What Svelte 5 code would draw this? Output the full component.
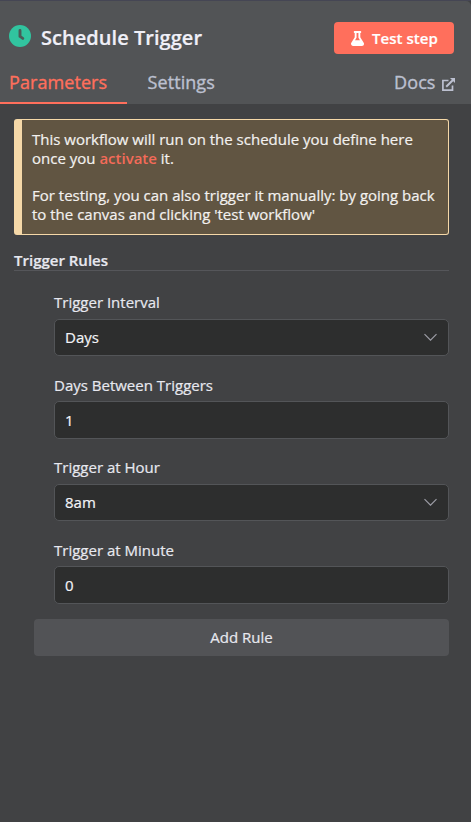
<script>
  const fields = [
    { label: 'Trigger Interval', value: 'Days', select: true },
    { label: 'Days Between Triggers', value: '1', select: false },
    { label: 'Trigger at Hour', value: '8am', select: true },
    { label: 'Trigger at Minute', value: '0', select: false }
  ];
</script>

<div class="panel">
  <header>
    <div class="top">
      <svg class="clock" width="22" height="22" viewBox="0 0 22 22">
        <circle cx="11" cy="11" r="11" fill="#31c49f" />
        <path d="M11 5.400V11.400L13.800 13.400" fill="none" stroke="#4b5a57" stroke-width="2.900" stroke-linecap="round" stroke-linejoin="round" />
      </svg>
      <h1>Schedule Trigger</h1>
      <button class="test">
        <svg width="13" height="15" viewBox="0 0 448 512">
          <path fill="#fff" d="M437.200 403.500L320 215V64h8c13.300 0 24-10.700 24-24V24c0-13.300-10.700-24-24-24H120c-13.300 0-24 10.700-24 24v16c0 13.300 10.700 24 24 24h8v151L10.800 403.500C-18.500 450.600 15.300 512 70.900 512h306.200c55.700 0 89.400-61.500 60.100-108.500zM137.900 320l48.200-77.600c3.700-5.200 5.800-11.600 5.800-18.400V64h64v160c0 6.900 2.200 13.200 5.800 18.400l48.200 77.600h-172z" />
        </svg>
        <span>Test step</span>
      </button>
    </div>
    <nav>
      <a class="tab active" href="#parameters"><span>Parameters</span></a>
      <a class="tab settings" href="#settings"><span>Settings</span></a>
      <a class="docs" href="#docs">
        <span>Docs</span>
        <svg width="13" height="13" viewBox="0 0 13 13" fill="none" stroke="#bcc0d0">
          <path d="M6.500 2.500H.9V12.100H10.500V7.500" stroke-width="1.700" />
          <path d="M4.200 8.800L11 2" stroke-width="2" />
          <path d="M8 0H13V5Z" fill="#bcc0d0" stroke="none" />
        </svg>
      </a>
    </nav>
  </header>

  <main>
    <div class="notice">
      <p>This workflow will run on the schedule you define here<br />once you <b>activate</b> it.</p>
      <p>For testing, you can also trigger it manually: by going back<br />to the canvas and clicking 'test workflow'</p>
    </div>

    <h2>Trigger Rules</h2>

    <div class="fields">
      {#each fields as field}
        <div class="field">
          <div class="label">{field.label}</div>
          <div class="input" class:select={field.select}>
            <span>{field.value}</span>
            {#if field.select}
              <svg width="13" height="8" viewBox="0 0 13 8">
                <path d="M.5 1.200L6.500 7.200L12.500 1.200" fill="none" stroke="#9b9ca5" stroke-width="1.2" />
              </svg>
            {/if}
          </div>
        </div>
      {/each}
    </div>

    <button class="add"><span>Add Rule</span></button>
  </main>
</div>

<style>
  :global(body) {
    margin: 0;
    background: #414244;
  }
  .panel {
    box-sizing: border-box;
    height: 822px;
    border-top: 1px solid #454654;
    background: #414244;
    color: #e7e8ef;
    font-family: 'Open Sans', sans-serif;
    font-size: 15px;
    -webkit-text-stroke: 0.2px currentColor;
    overflow: hidden;
  }
  header {
    box-sizing: border-box;
    height: 103px;
    background: #525456;
    border-radius: 0 5px 0 0;
  }
  .top {
    display: flex;
    align-items: center;
    height: 71px;
    padding: 0 17px 0 9px;
  }
  .clock {
    margin-bottom: 2px;
  }
  h1 {
    margin: 3px auto 0 10px;
    font-size: 20px;
    line-height: 28px;
    font-weight: 600;
    letter-spacing: 0.04px;
    color: #f0f0f8;
    white-space: nowrap;
  }
  button {
    border: 0;
    font-family: inherit;
    display: flex;
    align-items: center;
    justify-content: center;
    padding: 0;
  }
  .test {
    width: 120px;
    height: 32px;
    margin-top: 3px;
    gap: 8px;
    border-radius: 4px;
    background: #ff6f5c;
    color: #fff;
    font-size: 15px;
    font-weight: 600;
    box-sizing: border-box;
    padding-left: 1px;
    letter-spacing: 0.04px;
  }
  nav {
    display: flex;
    height: 32px;
    font-size: 18px;
    line-height: 20px;
    font-weight: 500;
    letter-spacing: 0.08px;
    -webkit-text-stroke-width: 0.35px;
  }
  nav a {
    color: #bcc0d0;
    text-decoration: none;
    white-space: nowrap;
  }
  .tab.active {
    box-sizing: border-box;
    width: 127px;
    padding-left: 9px;
    color: #ff6f5c;
    border-bottom: 2px solid #ff6f5c;
  }
  .settings {
    margin-left: 20.5px;
  }
  .docs {
    display: flex;
    margin-left: auto;
    margin-right: 16px;
    gap: 6.500px;
  }
  .docs svg {
    margin-top: 6px;
  }
  main {
    padding: 15px 22px 0 14px;
  }
  .notice {
    box-sizing: border-box;
    height: 116px;
    padding: 10px 0 0 10px;
    border: 1px solid #f5d8a8;
    border-left-width: 8px;
    border-radius: 3px;
    background: #615542;
    color: #f3f1ef;
    line-height: 18.75px;
    white-space: nowrap;
  }
  p {
    margin: 0 0 18.75px;
  }
  b {
    font-weight: 600;
    color: #f46b59;
    -webkit-text-stroke-width: 0;
  }
  h2 {
    box-sizing: border-box;
    height: 20px;
    margin: 16px 0 0;
    border-bottom: 1px solid #55565a;
    font-size: 15px;
    line-height: 19px;
    font-weight: 600;
  }
  .fields {
    display: grid;
    gap: 16px;
    margin: 21px 0 0 40px;
  }
  .label {
    height: 26.5px;
    line-height: 20px;
    font-weight: 500;
  }
  .input {
    box-sizing: border-box;
    display: flex;
    align-items: center;
    justify-content: space-between;
    height: 38px;
    margin-bottom: 2px;
    padding: 0 11px 0 10px;
    border: 1px solid #535558;
    border-radius: 5px;
    background: #2d2e2e;
    color: #f3f4f8;
  }
  .input.select {
    height: 37px;
    margin-bottom: 3px;
  }
  .add {
    box-sizing: border-box;
    width: 415px;
    height: 37px;
    margin: 13px 0 0 20px;
    padding-bottom: 2px;
    border-radius: 4px;
    background: #525356;
    color: #e7e8ef;
    font-size: 15px;
    font-weight: 500;
  }
</style>
